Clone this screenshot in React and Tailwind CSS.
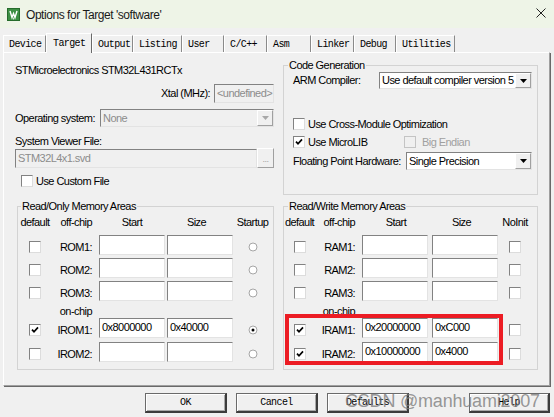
import React from "react";

const sunken =
  "border border-t-[#828282] border-l-[#828282] border-r-[#e3e3e3] border-b-[#e3e3e3]";

function Field({ className = "", value = "", disabled = false }) {
  return (
    <div
      className={`${sunken} ${
        disabled ? "bg-[#f0f0f0] text-[#8c8c8c]" : "bg-white text-black"
      } pl-[2px] text-[11px] whitespace-nowrap overflow-hidden ${className}`}
    >
      {value}
    </div>
  );
}

function DropBtn({ disabled }) {
  return (
    <div className="w-[16px] shrink-0 h-full flex items-center justify-center bg-[#f0f0f0] border border-t-white border-l-white border-r-[#a0a0a0] border-b-[#a0a0a0]">
      <svg width="7" height="4" viewBox="0 0 7 4">
        <path d="M0 0H7L3.5 4Z" fill={disabled ? "#a8a8a8" : "#000"} />
      </svg>
    </div>
  );
}

function Select({ className = "", value, disabled = false }) {
  return (
    <div
      className={`${sunken} flex items-stretch ${
        disabled ? "bg-[#f0f0f0] text-[#8c8c8c]" : "bg-white text-black"
      } ${className}`}
    >
      <div className="flex-1 flex items-center pl-[2px] text-[11px] whitespace-nowrap overflow-hidden">
        {value}
      </div>
      <DropBtn disabled={disabled} />
    </div>
  );
}

function Check({ checked = false, disabled = false }) {
  return (
    <div
      className={`w-[12px] h-[12px] shrink-0 flex items-center justify-center border ${
        disabled
          ? "bg-[#f0f0f0] border-[#c4c4c4]"
          : "bg-white border-t-[#828282] border-l-[#828282] border-r-[#dcdcdc] border-b-[#dcdcdc]"
      }`}
    >
      {checked && (
        <svg width="8" height="8" viewBox="0 0 8 8">
          <path d="M1 3.6 L3 5.8 L7 1.4" stroke="#000" strokeWidth="1.7" fill="none" />
        </svg>
      )}
    </div>
  );
}

function Radio({ checked = false }) {
  return (
    <svg width="10" height="10" viewBox="0 0 10 10">
      <circle cx="5" cy="5" r="4" fill="#fff" stroke="#a6a6a6" strokeWidth="1" />
      {checked && <circle cx="5" cy="5" r="1.5" fill="#000" />}
    </svg>
  );
}

function MemRow({ cols, label, start, size, checked, last }) {
  return (
    <div className={`grid ${cols} h-[20px] items-center`}>
      <div className="flex justify-center mt-[4px]">
        <Check checked={checked} />
      </div>
      <div className="text-right pr-[7px] mt-[4px] leading-[14px]">{label}</div>
      <div>
        <Field className="w-[66px] h-[20px] leading-[14px] pt-[1px]" value={start} />
      </div>
      <div>
        <Field className="w-[66px] h-[20px] leading-[14px] pt-[1px]" value={size} />
      </div>
      <div className="flex justify-center mt-[4px]">{last}</div>
    </div>
  );
}

function MemGroup({ title, cols, lastHeader, legendClass, rows, kind, className = "" }) {
  const lastCell = (r) =>
    kind === "radio" ? <Radio checked={r.startup} /> : <Check />;
  return (
    <fieldset className={`border border-[#d3d3d3] pb-[7px] ${className}`}>
      <legend className={`${legendClass} px-[1px] leading-[14px]`}>{title}</legend>
      <div className={`grid ${cols} h-[14px] mt-[2px] leading-[14px]`}>
        <div className="text-center">default</div>
        <div className="text-right pr-[7px]">off-chip</div>
        <div className="text-center pr-[2px]">Start</div>
        <div className="text-center pr-[7px]">Size</div>
        <div className="text-center">{lastHeader}</div>
      </div>
      <div className="mt-[6px]">
        <MemRow cols={cols} {...rows[0]} last={lastCell(rows[0])} />
      </div>
      <div className="mt-[3px]">
        <MemRow cols={cols} {...rows[1]} last={lastCell(rows[1])} />
      </div>
      <div className="mt-[3px]">
        <MemRow cols={cols} {...rows[2]} last={lastCell(rows[2])} />
      </div>
      <div className={`grid ${cols} h-[13px] mt-[4px] leading-[13px]`}>
        <div />
        <div className="text-right pr-[7px]">on-chip</div>
      </div>
      <div>
        <MemRow cols={cols} {...rows[3]} last={lastCell(rows[3])} />
      </div>
      <div className="mt-[4px]">
        <MemRow cols={cols} {...rows[4]} last={lastCell(rows[4])} />
      </div>
    </fieldset>
  );
}

const tabs = [
  ["Device", "w-[43px]"],
  ["Target", "w-[46px]"],
  ["Output", "w-[41px]"],
  ["Listing", "w-[49px]"],
  ["User", "w-[42px]"],
  ["C/C++", "w-[43px]"],
  ["Asm", "w-[44px]"],
  ["Linker", "w-[43px]"],
  ["Debug", "w-[42px]"],
  ["Utilities", "w-[59px]"],
];

const mono = "font-['Liberation_Mono',monospace] text-[10px] tracking-[-0.6px]";

function Btn({ label, className = "" }) {
  return (
    <div
      className={`h-[20px] flex items-center justify-center bg-[#f0f0f0] border border-[#6a6a6a] border-r-2 border-b-2 border-r-[#3c3c3c] border-b-[#3c3c3c] shadow-[inset_1px_1px_0_#ffffff,inset_-1px_-1px_0_#a8a8a8] ${mono} ${className}`}
    >
      {label}
    </div>
  );
}

export default function App() {
  const romRows = [
    { label: "ROM1:", start: "", size: "", checked: false },
    { label: "ROM2:", start: "", size: "", checked: false },
    { label: "ROM3:", start: "", size: "", checked: false },
    { label: "IROM1:", start: "0x8000000", size: "0x40000", checked: true, startup: true },
    { label: "IROM2:", start: "", size: "", checked: false },
  ];
  const ramRows = [
    { label: "RAM1:", start: "", size: "", checked: false },
    { label: "RAM2:", start: "", size: "", checked: false },
    { label: "RAM3:", start: "", size: "", checked: false },
    { label: "IRAM1:", start: "0x20000000", size: "0xC000", checked: true },
    { label: "IRAM2:", start: "0x10000000", size: "0x4000", checked: true },
  ];

  return (
    <div className="relative w-[554px] h-[417px] overflow-hidden bg-[#f0f0f0] text-black text-[11px] tracking-[-0.55px] font-['Liberation_Sans',Arial,sans-serif]">
      {/* Title bar */}
      <div className="h-[28px] bg-[#eef4e7] flex items-center pl-[7px] pr-[6px]">
        <svg width="13" height="13" viewBox="0 0 13 13" className="shrink-0">
          <rect x="0" y="0" width="13" height="13" fill="#3c8f43" />
          <rect x="0.5" y="0.5" width="12" height="12" fill="none" stroke="#256b2b" />
          <path d="M3 3 L5 9.5 L6.5 5.5 L8 9.5 L10 3" stroke="#fff" strokeWidth="1.4" fill="none" />
          <path d="M6.5 9.5 V11.5" stroke="#d8ecd9" strokeWidth="1.2" />
        </svg>
        <div className="ml-[6px] text-[12px] tracking-[-0.45px] text-[#1a1a1a] leading-[16px] mt-[2px]">
          Options for Target 'software'
        </div>
        <div className="flex-1" />
        <svg width="10" height="10" viewBox="0 0 10 10" className="mr-[2px] -mt-[2px]">
          <path d="M0.5 0.5 L9.5 9.5 M9.5 0.5 L0.5 9.5" stroke="#222" strokeWidth="1" />
        </svg>
      </div>

      {/* Tab strip */}
      <div className="mt-[5px] h-[19px] flex items-end pl-[3px]">
        {tabs.map(([t, w]) =>
          t === "Target" ? (
            <div
              key={t}
              className={`${w} relative z-10 h-[20px] -mb-[1px] bg-[#f0f0f0] border-t border-l border-t-white border-l-white border-r border-r-[#696969] flex items-center pl-[6px] pb-[1px] ${mono}`}
            >
              {t}
            </div>
          ) : (
            <div
              key={t}
              className={`${w} h-[17px] border-t border-l border-t-white border-l-white border-r border-r-[#8a8a8a] flex items-center pl-[5px] ${mono}`}
            >
              {t}
            </div>
          )
        )}
      </div>

      {/* Tab page */}
      <div className="ml-[3px] w-[547px] h-[334px] border-t border-l border-t-white border-l-white border-r border-b border-r-[#a0a0a0] border-b-[#a0a0a0] shadow-[1px_1px_0_#696969] flex">
        {/* Left column */}
        <div className="w-[274px] pl-[11px] pr-[4px] flex flex-col">
          <div className="mt-[10px] h-[14px] leading-[14px]">STMicroelectronics STM32L431RCTx</div>
          <div className="mt-[7px] h-[19px] flex items-center justify-end">
            <span>Xtal (MHz):</span>
            <Field
              disabled
              className="ml-[4px] w-[60px] h-[19px] flex items-center leading-[13px]"
              value="<undefined>"
            />
          </div>
          <div className="mt-[6px] h-[18px] flex items-center">
            <div className="w-[85px] whitespace-nowrap">Operating system:</div>
            <Select disabled className="w-[174px] h-[18px]" value="None" />
          </div>
          <div className="mt-[7px] h-[14px] leading-[14px]">System Viewer File:</div>
          <div className="h-[20px] flex items-start">
            <Field
              disabled
              className="mt-[1px] w-[242px] h-[19px] flex items-center leading-[13px]"
              value="STM32L4x1.svd"
            />
            <div className="w-[17px] h-[20px] flex items-end justify-center pb-[3px] bg-[#f0f0f0] border border-t-white border-l-white border-r-[#a0a0a0] border-b-[#a0a0a0] text-[#a0a0a0] text-[9px] leading-[9px]">
              ...
            </div>
          </div>
          <div className="mt-[6px] h-[14px] flex items-center pl-[6px]">
            <Check />
            <span className="ml-[3px]">Use Custom File</span>
          </div>
          <MemGroup
            className="mt-[11px] ml-[2px] w-[257px]"
            title="Read/Only Memory Areas"
            legendClass="ml-[3px]"
            cols="grid-cols-[34px_47px_68px_66px_39px]"
            lastHeader="Startup"
            rows={romRows}
            kind="radio"
          />
        </div>

        {/* Right column */}
        <div className="pl-[5px] flex flex-col">
          <fieldset className="mt-[5px] w-[255px] border border-[#d3d3d3] pb-[24px]">
            <legend className="ml-[4px] px-[1px] leading-[14px]">Code Generation</legend>
            <div className="h-[17px] flex items-center">
              <div className="w-[95px] pl-[9px]">ARM Compiler:</div>
              <Select className="w-[153px] h-[17px]" value="Use default compiler version 5" />
            </div>
            <div className="mt-[28px] h-[14px] flex items-center pl-[9px]">
              <Check />
              <span className="ml-[3px]">Use Cross-Module Optimization</span>
            </div>
            <div className="mt-[4px] h-[14px] flex items-center pl-[9px]">
              <div className="w-[111px] flex items-center">
                <Check checked />
                <span className="ml-[3px]">Use MicroLIB</span>
              </div>
              <Check disabled />
              <span className="ml-[6px] text-[#a0a0a0]">Big Endian</span>
            </div>
            <div className="mt-[3px] h-[18px] flex items-center">
              <div className="w-[122px] pl-[9px] whitespace-nowrap">Floating Point Hardware:</div>
              <Select className="w-[126px] h-[18px]" value="Single Precision" />
            </div>
          </fieldset>
          <MemGroup
            className="mt-[4px] w-[255px]"
            title="Read/Write Memory Areas"
            legendClass="ml-[4px]"
            cols="grid-cols-[31px_47px_70px_66px_34px]"
            lastHeader="NoInit"
            rows={ramRows}
            kind="check"
          />
        </div>
      </div>

      {/* Buttons */}
      <div className="mt-[7px] flex pl-[145px]">
        <Btn label="OK" className="w-[82px]" />
        <Btn label="Cancel" className="ml-[9px] w-[82px]" />
        <Btn label="Defaults" className="ml-[9px] w-[82px]" />
        <Btn label="Help" className="ml-[60px] w-[81px]" />
      </div>

      {/* Red annotation rectangle */}
      <div className="absolute left-[285px] top-[314px] w-[218px] h-[51px] border-[4px] border-[#ec1c24]" />

      {/* Watermark */}
      <div className="absolute left-[345px] top-[390px] text-[18px] tracking-[-0.2px] leading-[22px] text-[#7d7d7d]/80 whitespace-nowrap">
        CSDN @manhuami2007
      </div>
    </div>
  );
}
